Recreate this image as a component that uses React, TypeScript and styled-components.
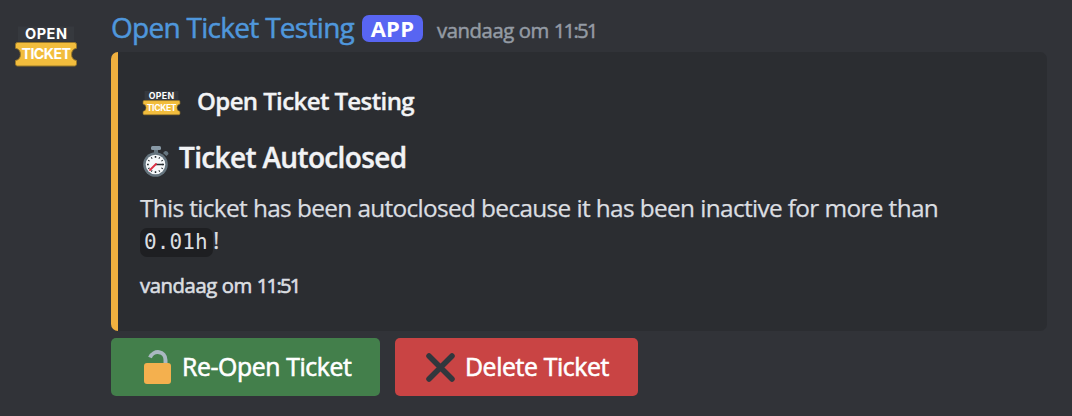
import React from "react";
import styled, { createGlobalStyle } from "styled-components";

const GlobalStyle = createGlobalStyle`
  * { box-sizing: border-box; }
  body { margin: 0; background: #313338; }
`;

const sans = `"Open Sans", "Noto Sans", sans-serif`;

const Message = styled.article`
  display: flex;
  width: 1072px;
  height: 416px;
  overflow: hidden;
  background: #313338;
  font-family: ${sans};
  white-space: nowrap;
`;

const AvatarColumn = styled.div`
  flex: 0 0 111px;
  padding: 25px 0 0 14px;
`;

const Content = styled.div`
  flex: 0 0 936px;
`;

const Header = styled.header`
  display: flex;
  align-items: baseline;
  height: 52px;
  line-height: 55px;
`;

const Username = styled.span`
  width: 251px;
  color: #4f97dc;
  font-size: 28px;
  letter-spacing: -0.71px;
  -webkit-text-stroke: 0.5px currentColor;
`;

const AppTag = styled.span`
  align-self: flex-start;
  width: 61px;
  height: 27px;
  margin-top: 15px;
  border-radius: 7px;
  background: #5865f2;
  color: #fff;
  font-size: 22px;
  font-weight: 700;
  line-height: 26px;
  letter-spacing: 0.3px;
  text-align: center;
`;

const Timestamp = styled.time`
  margin-left: 14px;
  color: #949ba4;
  font-size: 20.3px;
  letter-spacing: -0.42px;
  -webkit-text-stroke: 0.5px currentColor;
`;

const Clock = styled.span`
  letter-spacing: -1.75px;
`;

const Embed = styled.section`
  height: 279px;
  padding: 30px 20px 0 22px;
  border-left: 7px solid #f0b03f;
  border-radius: 7px;
  background: #2b2d31;
  color: #dbdee1;
`;

const Author = styled.div`
  display: flex;
  align-items: center;
  height: 40px;
  padding-left: 2px;
  gap: 16px;
  color: #f2f3f5;
  font-size: 24px;
  font-weight: 600;
  line-height: 30px;
  letter-spacing: -0.6px;
  -webkit-text-stroke: 0.35px currentColor;

  span {
    padding-bottom: 2px;
  }

  svg {
    margin-top: 1px;
  }
`;

const Title = styled.h2`
  display: flex;
  align-items: center;
  height: 40px;
  margin: 15px 0 0;
  padding-left: 3px;
  gap: 10px;
  color: #f2f3f5;
  font-size: 28px;
  font-weight: 600;
  letter-spacing: -0.65px;
  -webkit-text-stroke: 0.4px currentColor;

  svg {
    margin-top: 9px;
  }
`;

const Description = styled.p`
  height: 65px;
  margin: 15px 0 0;
  font-size: 24.4px;
  line-height: 32px;
`;

const Line = styled.span`
  display: block;
  letter-spacing: -0.68px;
  word-spacing: 0.25px;
  -webkit-text-stroke: 0.25px currentColor;
`;

const Code = styled.code`
  display: inline-block;
  width: 73px;
  height: 29px;
  padding-left: 4px;
  border-radius: 7px;
  background: #1e1f22;
  font-family: "DejaVu Sans Mono", monospace;
  font-size: 21px;
  line-height: 29px;
  letter-spacing: 0.1px;
  -webkit-text-stroke: 0;
`;

const Footer = styled.footer`
  margin-top: 13px;
  font-size: 20.3px;
  line-height: 30px;
  letter-spacing: -0.42px;
  -webkit-text-stroke: 0.6px currentColor;
`;

const Actions = styled.div`
  display: flex;
  gap: 15px;
  margin-top: 7px;
`;

const Button = styled.button<{ $tone: "success" | "danger" }>`
  display: flex;
  align-items: center;
  width: ${({ $tone }) => ($tone === "success" ? 269 : 243)}px;
  height: 58px;
  padding: 0 0 0 ${({ $tone }) => ($tone === "success" ? 33 : 30)}px;
  gap: ${({ $tone }) => ($tone === "success" ? 11 : 10)}px;
  border: 0;
  border-radius: 5px;
  background: ${({ $tone }) => ($tone === "success" ? "#437f4b" : "#c94444")};
  color: #fff;
  font-family: ${sans};
  font-size: 24.8px;
  letter-spacing: -0.38px;
  -webkit-text-stroke: 0.6px currentColor;

  span {
    padding-bottom: 2px;
  }
`;

const Svg = styled.svg`
  display: block;
  flex: none;
`;

const LogoText = styled.text`
  font-family: "Inter", sans-serif;
  font-weight: 700;
  fill: #fff;
  letter-spacing: 0;
  -webkit-text-stroke: 0;
`;

const Logo = ({ width, height }: { width: number; height: number }) => (
  <Svg width={width} height={height} viewBox="0 0 64 43">
    <path d="M4 1.5h56v15H4z" fill="#36393e" />
    <path
      d="M3.5 17.500h57q2 0 2 2v3.800a6 6.200 0 0 0 0 12.200v3.500q0 2-2 2h-57q-2 0-2-2v-3.500a6 6.200 0 0 0 0-12.200v-3.800q0-2 2-2z"
      fill="#f2bd3d"
      stroke="#997829"
      strokeWidth="1"
    />
    <LogoText x="11" y="14.300" fontSize="14.500" textLength="42">OPEN</LogoText>
    <LogoText x="7.500" y="34" fontSize="14.200" textLength="49.500">TICKET</LogoText>
  </Svg>
);

const ticks = Array.from({ length: 12 }, (_, i) => i * 30);

const Stopwatch = () => (
  <Svg width="26" height="32" viewBox="0 0 26 32">
    <rect x="8" y="0" width="10" height="4" rx="1.500" fill="#8899a6" />
    <path d="M11 4h4v3h-4z" fill="#66757f" />
    <path d="m20 7 2-2q3-.5 3.500 3l-2 2z" fill="#66757f" />
    <circle cx="12.500" cy="18.500" r="12.300" fill="#66757f" />
    <circle cx="12.500" cy="18.500" r="9.800" fill="#f5f8fa" />
    {ticks.map((angle) => (
      <path
        key={angle}
        d="M12.500 10v1.800"
        stroke="#292f33"
        strokeWidth={angle % 90 ? 1 : 1.500}
        transform={`rotate(${angle} 12.500 18.500)`}
      />
    ))}
    <path d="M12.500 18.500H20" stroke="#292f33" strokeWidth="1.500" />
    <path d="M13 18 7 24" stroke="#dd2e44" strokeWidth="1.800" strokeLinecap="round" />
  </Svg>
);

const OpenLock = () => (
  <Svg width="27" height="34" viewBox="0 0 27 34">
    <path d="M6 7.500C9.500-.5 21.500.5 21.500 10v5" fill="none" stroke="#aab8c2" strokeWidth="4" />
    <rect y="13" width="27" height="21" rx="3" fill="#f4b04e" />
  </Svg>
);

const Cross = () => (
  <Svg width="30" height="29" viewBox="0 0 30 29">
    <path d="m4 3 23 23M27 3 4 26" stroke="#31373d" strokeWidth="5.500" strokeLinecap="round" />
  </Svg>
);

export default function App() {
  return (
    <>
      <GlobalStyle />
      <Message>
        <AvatarColumn>
          <Logo width={64} height={43} />
        </AvatarColumn>
        <Content>
          <Header>
            <Username>Open Ticket Testing</Username>
            <AppTag>APP</AppTag>
            <Timestamp>
              vandaag om <Clock>11:51</Clock>
            </Timestamp>
          </Header>
          <Embed>
            <Author>
              <Logo width={39} height={26} />
              <span>Open Ticket Testing</span>
            </Author>
            <Title>
              <Stopwatch />
              <span>Ticket Autoclosed</span>
            </Title>
            <Description>
              <Line>This ticket has been autoclosed because it has been inactive for more than</Line>
              <Line>
                <Code>0.01h</Code>!
              </Line>
            </Description>
            <Footer>
              vandaag om <Clock>11:51</Clock>
            </Footer>
          </Embed>
          <Actions>
            <Button $tone="success">
              <OpenLock />
              <span>Re-Open Ticket</span>
            </Button>
            <Button $tone="danger">
              <Cross />
              <span>Delete Ticket</span>
            </Button>
          </Actions>
        </Content>
      </Message>
    </>
  );
}
